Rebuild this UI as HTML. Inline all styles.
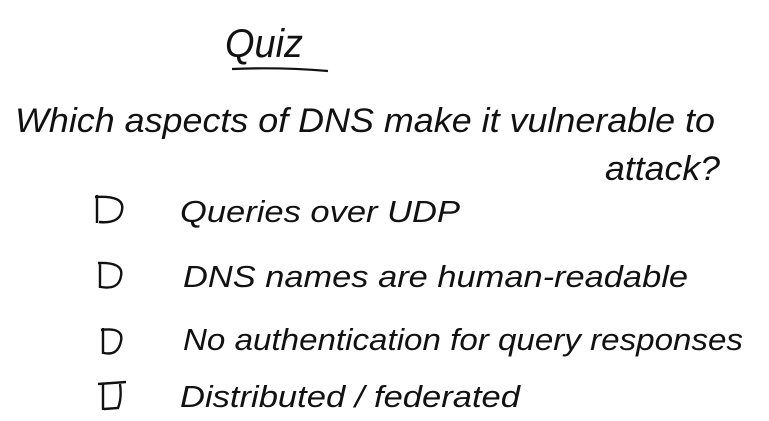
<!DOCTYPE html>
<html><head><meta charset="utf-8"><style>
html,body{margin:0;padding:0;background:#fff;width:769px;height:421px;overflow:hidden}
svg{display:block}
text{font-family:"Liberation Sans",sans-serif;font-style:italic;fill:#111}
</style></head><body>
<svg width="769" height="421" viewBox="0 0 769 421">
<text x="225" y="57" font-size="40" textLength="78" lengthAdjust="spacingAndGlyphs">Quiz</text>
<path d="M232 69 Q280 67 328 71" stroke="#111" stroke-width="2.2" fill="none"/>
<text x="15" y="132" font-size="34" textLength="700" lengthAdjust="spacingAndGlyphs">Which aspects of DNS make it vulnerable to</text>
<text x="605" y="180" font-size="34" textLength="115" lengthAdjust="spacingAndGlyphs">attack?</text>
<g stroke="#111" stroke-width="2.4" fill="none">
<path d="M97 195 L97 223 M95 197 Q125 195 122 210 Q120 224 99 222"/>
<path d="M100 262 L100 288 M98 263 Q124 262 121 276 Q119 290 101 287"/>
<path d="M103 328 L103 354 M101 330 Q124 327 121 341 Q118 356 104 353"/>
<path d="M103 383 L103 410 M98 384 L126 382 M120 384 Q122 398 118 408 L104 409"/>
</g>
<text x="180" y="222" font-size="31" textLength="280" lengthAdjust="spacingAndGlyphs">Queries over UDP</text>
<text x="183" y="287" font-size="31" textLength="505" lengthAdjust="spacingAndGlyphs">DNS names are human-readable</text>
<text x="183" y="350" font-size="31" textLength="560" lengthAdjust="spacingAndGlyphs">No authentication for query responses</text>
<text x="180" y="407" font-size="31" textLength="340" lengthAdjust="spacingAndGlyphs">Distributed / federated</text>
</svg>
</body></html>
